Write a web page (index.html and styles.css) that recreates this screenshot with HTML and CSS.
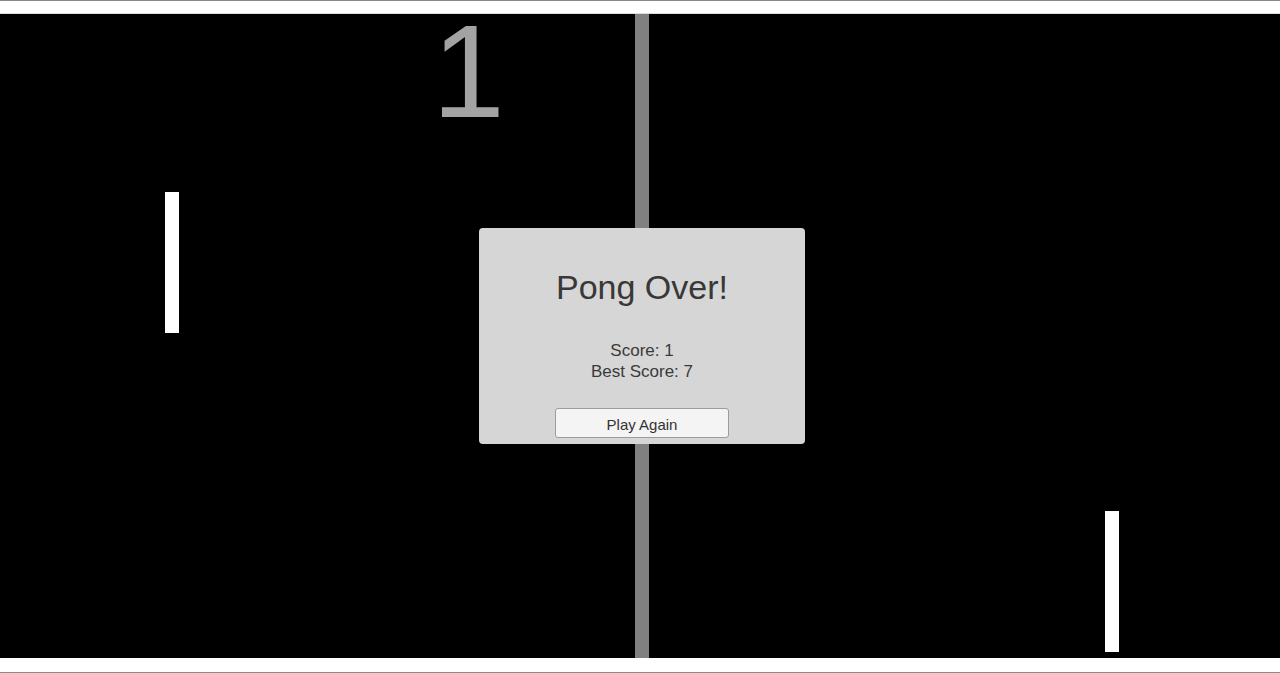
FILE: index.html
```html
<!DOCTYPE html>
<html lang="en">
<head>
<meta charset="utf-8">
<title>Pong</title>
<link rel="stylesheet" href="styles.css">
</head>
<body>
<div class="frame">
  <div class="game">
    <div class="divider"></div>
    <div class="score">1</div>
    <div class="paddle paddle-left"></div>
    <div class="paddle paddle-right"></div>
    <div class="dialog">
      <h1 class="dialog-title">Pong Over!</h1>
      <div class="dialog-scores">
        <div>Score: 1</div>
        <div>Best Score: 7</div>
      </div>
      <button class="dialog-button" type="button">Play Again</button>
    </div>
  </div>
</div>
</body>
</html>
```

FILE: styles.css
```css
html, body {
  margin: 0;
  padding: 0;
  background: #ffffff;
}

body {
  font-family: "Liberation Sans", Arial, sans-serif;
}

.frame {
  box-sizing: border-box;
  height: 673px;
  width: 1280px;
  border-top: 1px solid #8a8a8a;
  border-bottom: 1px solid #8a8a8a;
  padding: 12px 0 14px;
}

.game {
  position: relative;
  height: 644px;
  background: #000000;
  border-top: 1px solid #dcdcdc;
}

.divider {
  position: absolute;
  left: 635px;
  top: 0;
  width: 14px;
  height: 100%;
  background: #808080;
}

.score {
  position: absolute;
  left: 432px;
  top: -18px;
  font-size: 131px;
  line-height: normal;
  color: #a3a3a3;
}

.paddle {
  position: absolute;
  width: 14px;
  height: 141px;
  background: #ffffff;
}

.paddle-left {
  left: 165px;
  top: 178px;
}

.paddle-right {
  left: 1105px;
  top: 497px;
}

.dialog {
  position: absolute;
  left: 479px;
  top: 214px;
  box-sizing: border-box;
  width: 326px;
  height: 216px;
  background: #d6d6d6;
  border-radius: 4px;
  padding-top: 39px;
  display: flex;
  flex-direction: column;
  align-items: center;
  color: #363636;
}

.dialog-title {
  margin: 0;
  font-size: 34px;
  line-height: 40px;
  font-weight: normal;
  color: #383838;
}

.dialog-scores {
  margin-top: 33px;
  font-size: 17px;
  line-height: 21px;
  text-align: center;
  color: #3a3a3a;
}

.dialog-button {
  margin-top: 26px;
  box-sizing: border-box;
  width: 174px;
  height: 30px;
  padding: 6px 0 2px;
  font-family: "Liberation Sans", Arial, sans-serif;
  font-size: 15px;
  line-height: 20px;
  color: #333333;
  background: #f4f4f4;
  border: 1px solid #9c9c9c;
  border-radius: 3px;
}
```
